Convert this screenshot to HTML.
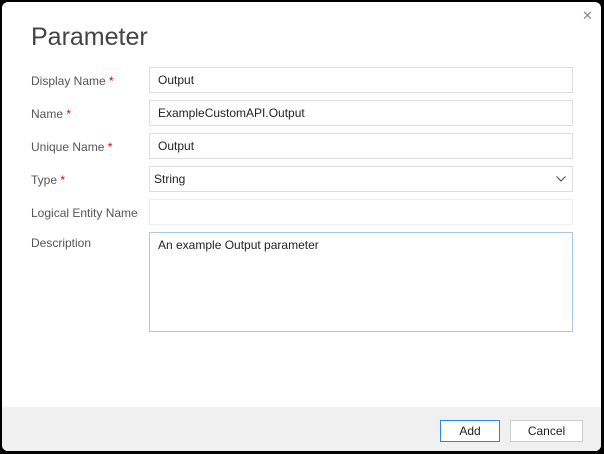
<!DOCTYPE html>
<html><head><style>
body{margin:0;width:604px;height:454px;background:#000;font-family:"Segoe UI","Liberation Sans",sans-serif;overflow:hidden;position:relative}
.dlg{position:absolute;left:2px;top:2px;width:599px;height:449px;background:#fff;border-radius:6px;overflow:hidden}
.t{position:absolute;left:29px;top:21px;font-size:25px;font-weight:300;color:#444}
.x{position:absolute;left:580px;top:6px;font-size:13px;color:#888}
.lab{position:absolute;left:29px;font-size:12px;color:#555}
.lab span{color:#d00}
.in{position:absolute;left:147px;width:414px;height:24px;border:1px solid #ddd;font-size:12px;color:#222;line-height:24px;padding-left:8px;box-sizing:content-box}
.foot{position:absolute;left:0;top:405px;width:599px;height:44px;background:#f0f0f0}
.btn{position:absolute;top:13px;height:20px;border:1px solid #ccc;background:#fff;font-size:12px;text-align:center;line-height:20px;color:#222}
</style></head><body>
<div class="dlg">
<div class="t">Parameter</div>
<div class="x">✕</div>
<div class="lab" style="top:72px">Display Name <span>*</span></div>
<div class="lab" style="top:105px">Name <span>*</span></div>
<div class="lab" style="top:138px">Unique Name <span>*</span></div>
<div class="lab" style="top:171px">Type <span>*</span></div>
<div class="lab" style="top:204px">Logical Entity Name</div>
<div class="lab" style="top:234px">Description</div>
<div class="in" style="top:65px">Output</div>
<div class="in" style="top:98px">ExampleCustomAPI.Output</div>
<div class="in" style="top:131px">Output</div>
<div class="in" style="top:164px;padding-left:4px;width:418px">String<svg style="position:absolute;right:6px;top:9px" width="10" height="6"><path d="M0.5 0.5L5 5L9.5 0.5" fill="none" stroke="#444"/></svg></div>
<div class="in" style="top:197px;border-color:#eee"></div>
<div class="in" style="top:230px;border-color:#a9c8e8;line-height:18px;padding-top:3px;height:95px">An example Output parameter</div>
<div class="foot">
<div class="btn" style="left:438px;width:58px;border-color:#2b88d8">Add</div>
<div class="btn" style="left:508px;width:71px">Cancel</div>
</div>
</div>
</body></html>
